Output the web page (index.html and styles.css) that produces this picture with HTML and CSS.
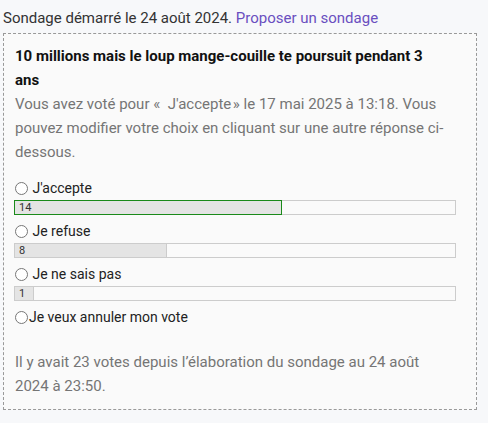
FILE: index.html
```html
<!DOCTYPE html>
<html lang="fr">
<head>
<meta charset="utf-8">
<link rel="stylesheet" href="styles.css">
</head>
<body>
<div class="page">
  <p class="intro">Sondage démarré le 24 août 2024. <a href="#" class="link">Proposer un sondage</a></p>
  <div class="poll">
    <h2 class="title">10 millions mais le loup mange-couille te poursuit pendant 3 ans</h2>
    <p class="note">Vous avez voté pour «&nbsp; J'accepte&#8202;» le 17 mai 2025 à 13:18. Vous pouvez modifier votre choix en cliquant sur une autre réponse ci-dessous.</p>
    <div class="options">
      <div class="option">
        <label class="choice"><input type="radio" name="v"> J'accepte</label>
        <div class="track"><div class="fill fill-mine" style="width:60.87%"><span class="count">14</span></div></div>
      </div>
      <div class="option">
        <label class="choice"><input type="radio" name="v"> Je refuse</label>
        <div class="track"><div class="fill" style="width:34.78%"><span class="count">8</span></div></div>
      </div>
      <div class="option">
        <label class="choice"><input type="radio" name="v"> Je ne sais pas</label>
        <div class="track"><div class="fill" style="width:4.6%"><span class="count">1</span></div></div>
      </div>
      <div class="option">
        <label class="choice"><input type="radio" name="v">Je veux annuler mon vote</label>
      </div>
    </div>
    <p class="note footer">Il y avait 23 votes depuis l’élaboration du sondage au 24 août 2024 à 23:50.</p>
  </div>
</div>
</body>
</html>
```
FILE: styles.css
```css
html, body {
  margin: 0;
  padding: 0;
  background: #f7f8fa;
}
body {
  font-family: Roboto, "Liberation Sans", sans-serif;
  color: #222;
}
.page {
  width: 474px;
  padding: 6px 3px 0;
}
.intro {
  margin: 0;
  font-size: 15px;
  line-height: 24px;
  color: #333;
}
.link {
  color: #6a4fc0;
  text-decoration: none;
}
.poll {
  margin-top: 3px;
  border: 1px dashed #999;
  background: #fafafa;
  padding: 10px 20px 11px 11px;
}
.title {
  margin: 0;
  padding-right: 12px;
  font-size: 15px;
  line-height: 24px;
  font-weight: 700;
  color: #111;
}
.note {
  margin: 0;
  font-size: 15px;
  line-height: 24px;
  color: #757575;
}
.options {
  margin-top: 14px;
  display: flex;
  flex-direction: column;
  gap: 6px;
}
.option {
  display: flex;
  flex-direction: column;
  gap: 2px;
}
.choice {
  display: flex;
  align-items: center;
  font-size: 14px;
  line-height: 20px;
  color: #222;
  white-space: pre;
}
.choice input {
  margin: 0 1px 0 0;
  width: 13px;
  height: 13px;
}
.track {
  display: flex;
  height: 13px;
  width: 440px;
  margin-left: -1px;
  border: 1px solid #ccc;
  background: #fafafa;
}
.fill {
  display: flex;
  align-items: center;
  margin: -1px 0 -1px -1px;
  background: #e4e4e4;
  border: 1px solid #ccc;
  box-sizing: border-box;
  height: 15px;
}
.fill-mine {
  border-color: #1a8a1a;
}
.count {
  font-size: 11px;
  line-height: 13px;
  color: #333;
  padding-left: 4px;
}
.footer {
  margin-top: 23px;
}
```
